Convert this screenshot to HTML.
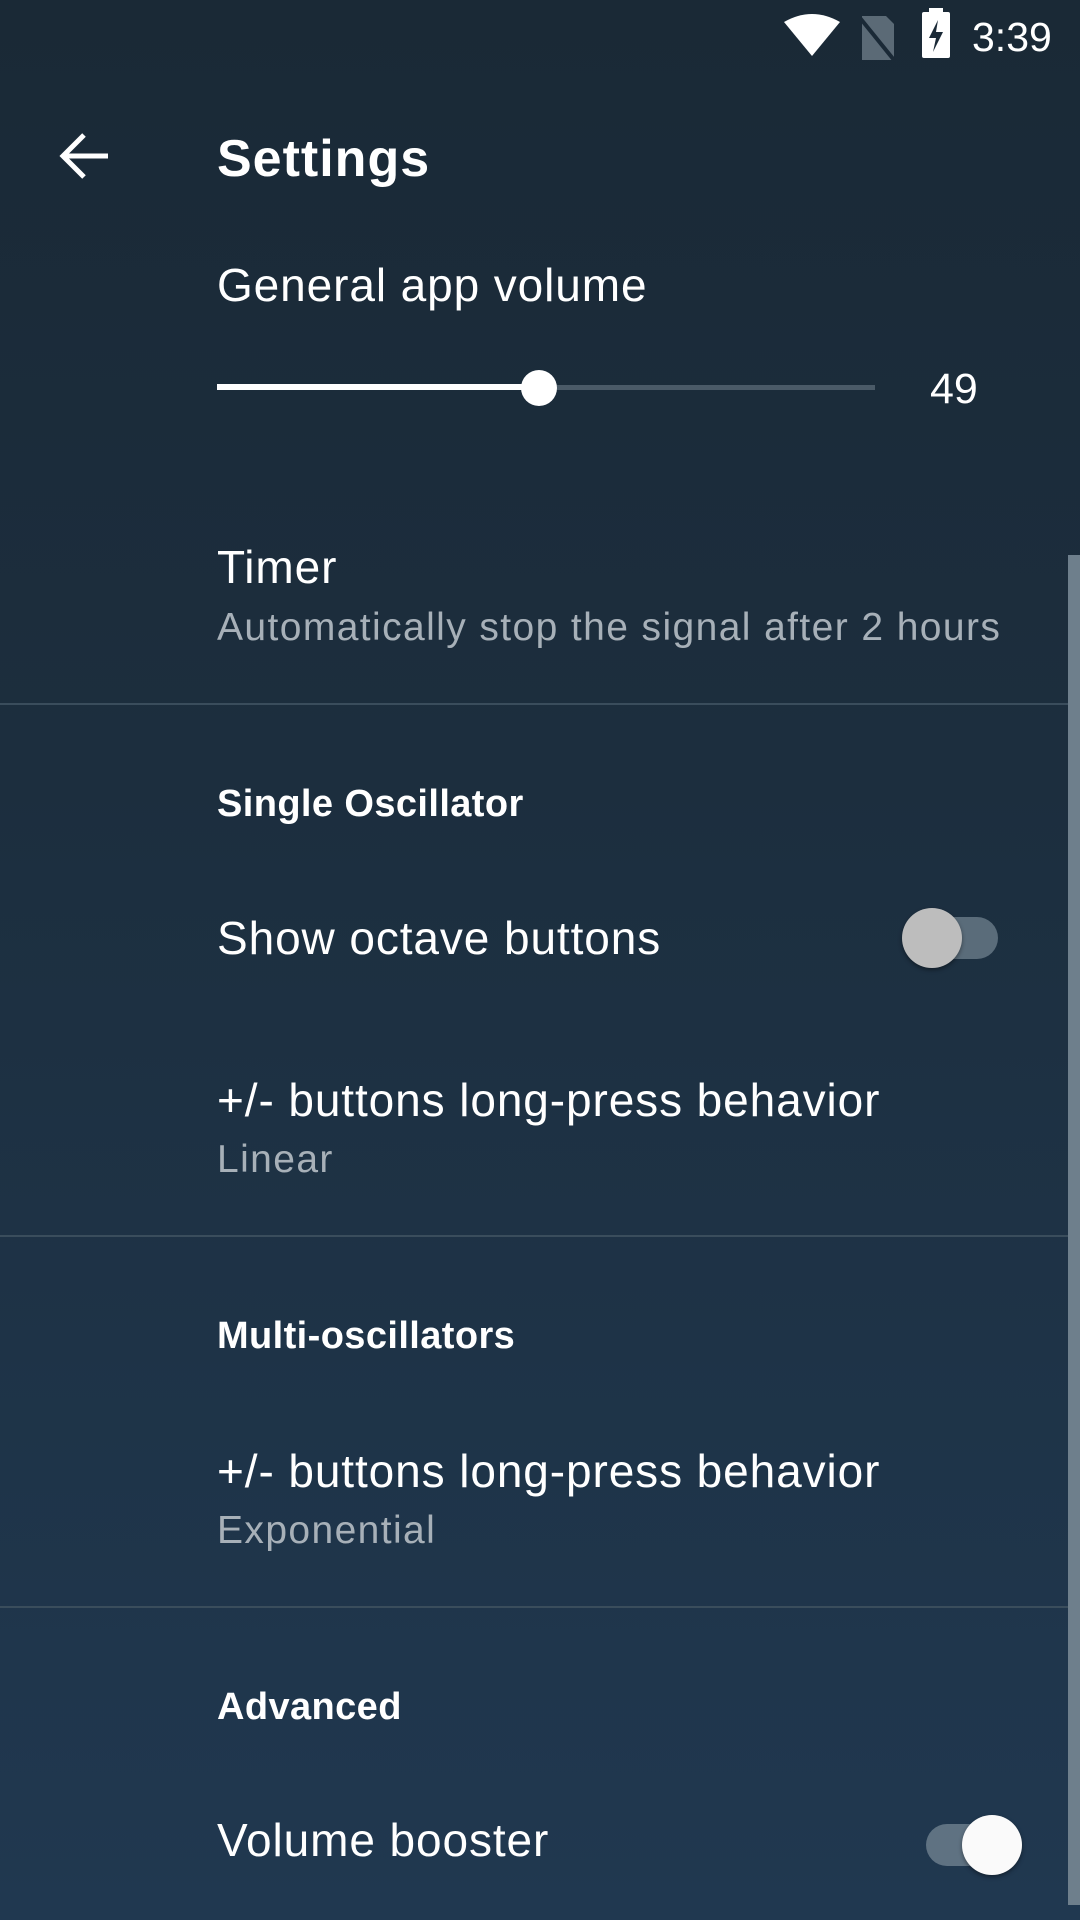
<!DOCTYPE html>
<html><head><meta charset="utf-8"><style>
*{margin:0;padding:0;box-sizing:border-box}
body{width:1080px;height:1920px;overflow:hidden;font-family:"Liberation Sans",sans-serif;color:#fff;
background:linear-gradient(180deg,#1a2936 0%,#1c2e3e 40%,#203850 100%);position:relative}
.t{position:absolute;left:217px;white-space:nowrap;line-height:60px;height:60px}
.title{font-size:46px;letter-spacing:0.9px}
.sub{font-size:39px;color:#a7b0b8;letter-spacing:1.4px}
.hdr{font-size:38px;font-weight:bold;letter-spacing:0.4px}
.div{position:absolute;left:0;width:1068px;height:2px;background:#3a4d5c}
</style></head><body>
<svg style="position:absolute;left:784px;top:14px" width="56" height="42" viewBox="0 0 56 42"><path d="M0 8 Q28 -8 56 8 L28 42 Z" fill="#fff"/></svg>
<svg style="position:absolute;left:860px;top:16px" width="36" height="44" viewBox="0 0 36 44"><path d="M2 0 H26 L34 8 V44 H2 Z" fill="#5b6a76"/><path d="M0 2 L34 44" stroke="#1a2936" stroke-width="4"/></svg>
<div style="position:absolute;left:922px;top:12px;width:28px;height:46px;background:#fff;border-radius:2px"></div>
<div style="position:absolute;left:929px;top:8px;width:14px;height:6px;background:#fff"></div>
<svg style="position:absolute;left:924px;top:18px" width="24" height="36" viewBox="0 0 24 36"><path d="M14 2 L5 20 H12 L9 34 L19 14 H12 Z" fill="#1a2936"/></svg>
<div style="position:absolute;left:972px;top:14px;font-size:41px;line-height:46px">3:39</div>
<svg style="position:absolute;left:58px;top:131px" width="52" height="50" viewBox="0 0 52 50"><path d="M50 25 H6 M26 4 L5 25 L26 46" stroke="#fff" stroke-width="5" fill="none"/></svg>
<div class="t" style="top:129px;font-size:52px;font-weight:bold;letter-spacing:1px">Settings</div>
<div class="t title" style="top:255px">General app volume</div>
<div style="position:absolute;left:217px;top:385px;width:658px;height:5px;background:#4a5a67"></div>
<div style="position:absolute;left:217px;top:384px;width:322px;height:6px;background:#fff"></div>
<div style="position:absolute;left:521px;top:370px;width:36px;height:36px;border-radius:50%;background:#fff"></div>
<div style="position:absolute;left:930px;top:359px;font-size:43px;line-height:60px">49</div>
<div class="t title" style="top:537px">Timer</div>
<div class="t sub" style="top:598px">Automatically stop the signal after 2 hours</div>
<div class="div" style="top:703px"></div>
<div class="t hdr" style="top:774px">Single Oscillator</div>
<div class="t title" style="top:908px">Show octave buttons</div>
<div style="position:absolute;left:920px;top:917px;width:78px;height:42px;border-radius:21px;background:#5a6c7a"></div>
<div style="position:absolute;left:902px;top:908px;width:60px;height:60px;border-radius:50%;background:#bdbdbd;box-shadow:0 2px 4px rgba(0,0,0,.4)"></div>
<div class="t title" style="top:1070px">+/- buttons long-press behavior</div>
<div class="t sub" style="top:1130px">Linear</div>
<div class="div" style="top:1235px"></div>
<div class="t hdr" style="top:1306px">Multi-oscillators</div>
<div class="t title" style="top:1441px">+/- buttons long-press behavior</div>
<div class="t sub" style="top:1501px">Exponential</div>
<div class="div" style="top:1606px"></div>
<div class="t hdr" style="top:1677px">Advanced</div>
<div class="t title" style="top:1810px">Volume booster</div>
<div style="position:absolute;left:926px;top:1824px;width:82px;height:42px;border-radius:21px;background:#5f7282"></div>
<div style="position:absolute;left:962px;top:1815px;width:60px;height:60px;border-radius:50%;background:#fafafa;box-shadow:0 2px 4px rgba(0,0,0,.4)"></div>
<div style="position:absolute;left:1068px;top:555px;width:12px;height:1350px;background:#6e7f8c"></div>
</body></html>
